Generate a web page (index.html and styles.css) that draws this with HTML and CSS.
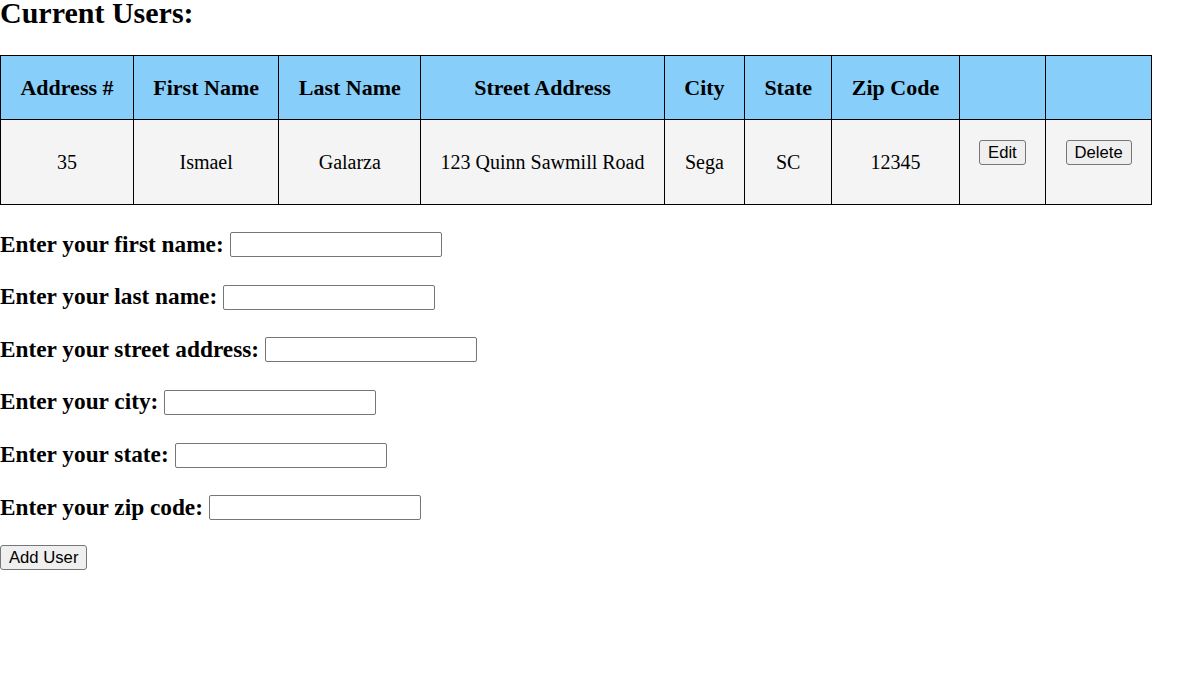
FILE: index.html
```html
<!DOCTYPE html>
<html>
<head>
<meta charset="utf-8">
<link rel="stylesheet" href="styles.css">
</head>
<body>
<h2 class="title">Current Users:</h2>
<table class="users">
  <thead>
    <tr>
      <th>Address #</th>
      <th>First Name</th>
      <th>Last Name</th>
      <th>Street Address</th>
      <th>City</th>
      <th>State</th>
      <th>Zip Code</th>
      <th></th>
      <th></th>
    </tr>
  </thead>
  <tbody>
    <tr>
      <td>35</td>
      <td>Ismael</td>
      <td>Galarza</td>
      <td>123 Quinn Sawmill Road</td>
      <td>Sega</td>
      <td>SC</td>
      <td>12345</td>
      <td class="action"><div class="action-form"><button class="btn">Edit</button></div></td>
      <td class="action"><div class="action-form"><button class="btn">Delete</button></div></td>
    </tr>
  </tbody>
</table>
<div class="form">
  <div class="row"><label class="lbl">Enter your first name:</label> <input class="field" type="text"></div>
  <div class="row"><label class="lbl">Enter your last name:</label> <input class="field" type="text"></div>
  <div class="row"><label class="lbl">Enter your street address:</label> <input class="field" type="text"></div>
  <div class="row"><label class="lbl">Enter your city:</label> <input class="field" type="text"></div>
  <div class="row"><label class="lbl">Enter your state:</label> <input class="field" type="text"></div>
  <div class="row"><label class="lbl">Enter your zip code:</label> <input class="field" type="text"></div>
  <div class="submit-row"><button class="btn">Add User</button></div>
</div>
</body>
</html>
```
FILE: styles.css
```css
html, body {
  margin: 0;
  padding: 0;
  background: #ffffff;
  color: #000000;
  font-family: "Liberation Serif", "Times New Roman", serif;
}

.title {
  font-size: 30px;
  font-weight: bold;
  line-height: 28px;
  margin: 0 0 27px 0;
  position: relative;
  top: -1px;
}

.users {
  border-collapse: collapse;
}

.users th,
.users td {
  border: 1px solid #000000;
  padding: 20px 19.4px;
  text-align: center;
}

.users th {
  background: #87cefa;
  font-size: 22px;
  font-weight: bold;
  line-height: 23px;
}

.users td {
  background: #f4f4f4;
  font-size: 20px;
  line-height: 23px;
  vertical-align: middle;
}

.users td.action {
  vertical-align: top;
}

.action-form {
  margin-bottom: 19px;
}

.btn {
  font-family: Arial, "Liberation Sans", sans-serif;
  font-size: 16.67px;
  line-height: 19px;
  height: 25px;
  padding: 1px 8px;
  background: #efefef;
  color: #000000;
  border: 1px solid #767676;
  border-radius: 3px;
  box-sizing: border-box;
}

.form {
  margin-top: 26.5px;
  display: flex;
  flex-direction: column;
  gap: 26.67px;
}

.row {
  height: 26px;
  display: flex;
  align-items: center;
  gap: 6px;
  font-size: 23.3px;
}

.lbl {
  font-weight: bold;
  line-height: 26px;
  position: relative;
  top: -1px;
}

.field {
  width: 212px;
  height: 25px;
  box-sizing: border-box;
  border: 1px solid #767676;
  border-radius: 2px;
  padding: 1px 2px;
  margin: 0;
  font-size: 16.67px;
}

.submit-row {
  margin-top: -2px;
}
```
